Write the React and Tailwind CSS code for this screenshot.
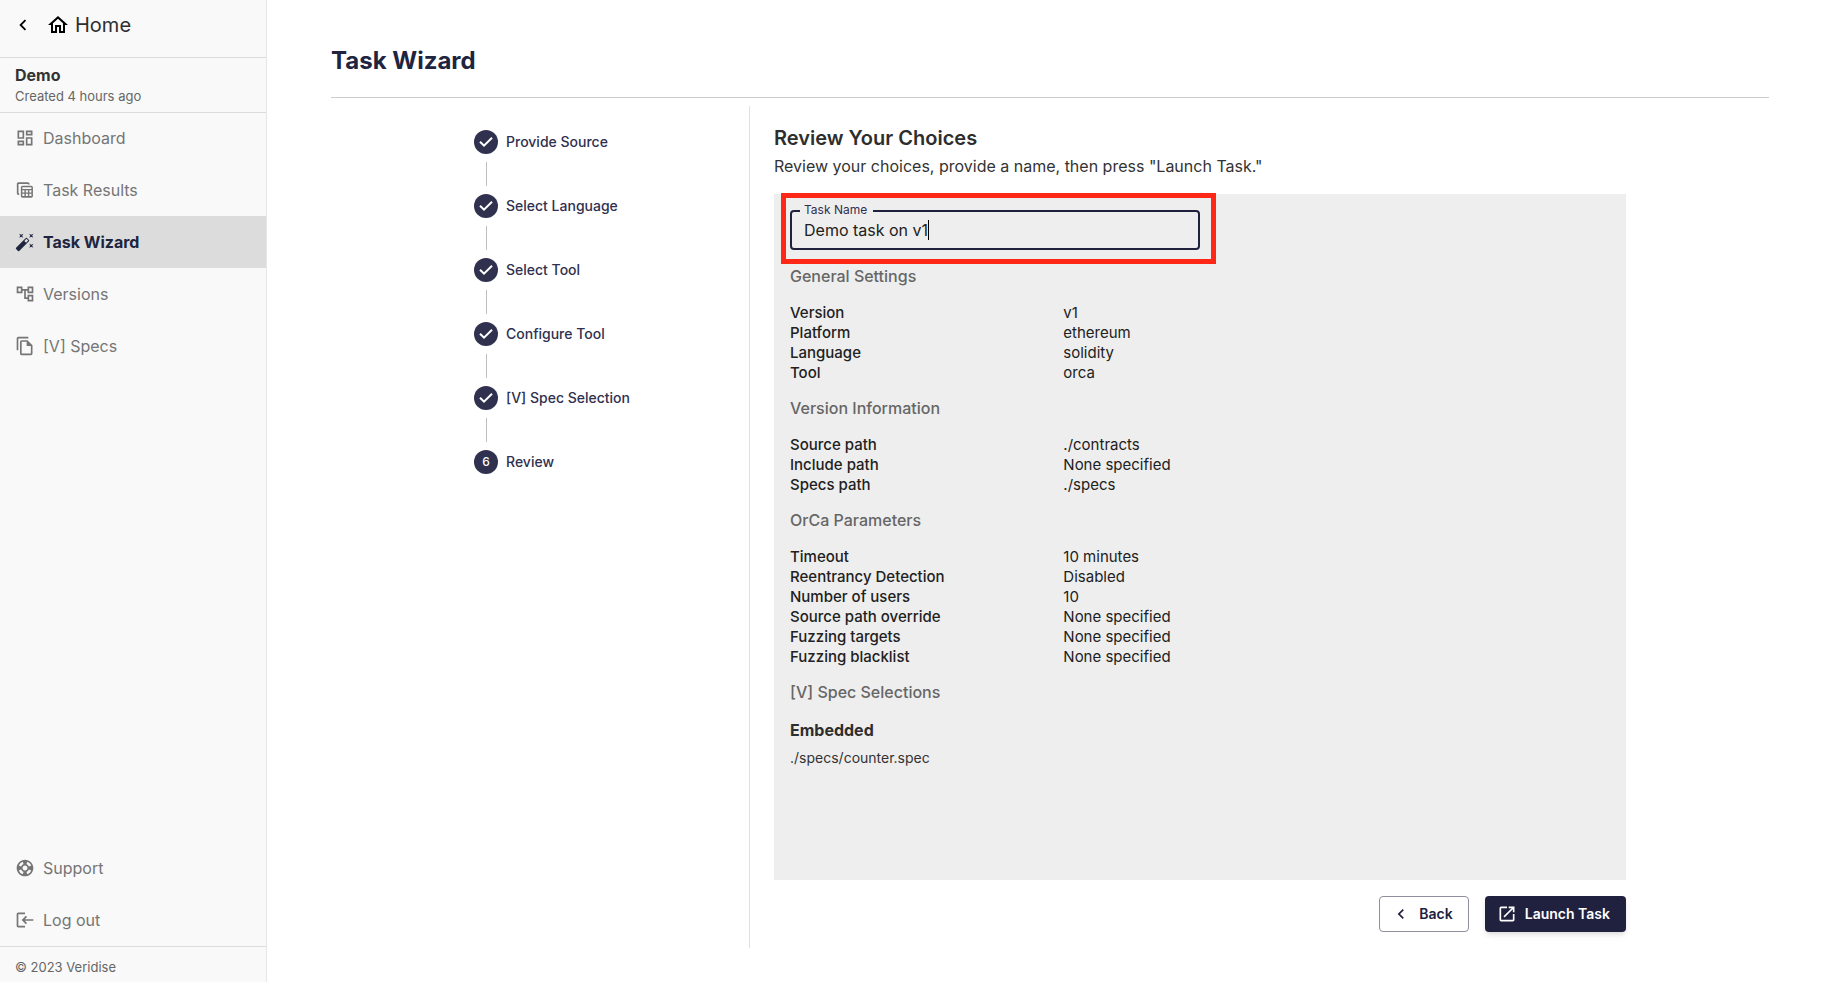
import { useState } from "react";
import {
  MdNavigateBefore,
  MdOutlineHome,
  MdOutlineDashboard,
  MdAutoFixHigh,
  MdOutlineAccountTree,
  MdOutlineFileCopy,
  MdSupport,
  MdOpenInNew,
} from "react-icons/md";

function LogOutIcon({ className }) {
  return (
    <svg viewBox="0 0 24 24" fill="currentColor" className={className} aria-hidden="true">
      <path d="M4 5h8V3H4c-1.1 0-2 .9-2 2v14c0 1.1.9 2 2 2h8v-2H4V5z" />
      <path d="M13 7l1.41 1.41L11.83 11H22v2H11.83l2.58 2.58L13 17l-5-5z" />
    </svg>
  );
}

function TablesIcon({ className }) {
  return (
    <svg viewBox="0 0 24 24" fill="currentColor" className={className} aria-hidden="true">
      <path d="M17.5 5.5h-2V4.8H4.2V16H5v2h-.8c-1.1 0-2-.9-2-2V4.8c0-1.1.9-2 2-2h11.3c1.1 0 2 .9 2 2v.7z" />
      <path
        fillRule="evenodd"
        d="M9 7h10.5c1.1 0 2 .9 2 2v10.2c0 1.1-.9 2-2 2H9c-1.1 0-2-.9-2-2V9c0-1.1.9-2 2-2zM8.8 8.8v1.9h10.9V8.8zM8.8 12.3v2.6h2.5v-2.6zM13 12.3v2.6h2.5v-2.6zM17.2 12.3v2.6h2.5v-2.6zM8.8 16.6v2.7h2.5v-2.7zM13 16.6v2.7h2.5v-2.7zM17.2 16.6v2.7h2.5v-2.7z"
      />
    </svg>
  );
}

function CheckIcon({ className }) {
  return (
    <svg
      viewBox="0 0 24 24"
      fill="none"
      stroke="currentColor"
      strokeWidth="2"
      className={className}
      aria-hidden="true"
    >
      <path d="M6 11.7l4 4L18 7.7" />
    </svg>
  );
}

const mainNav = [
  { label: "Dashboard", Icon: MdOutlineDashboard },
  { label: "Task Results", Icon: TablesIcon },
  { label: "Task Wizard", Icon: MdAutoFixHigh, active: true },
  { label: "Versions", Icon: MdOutlineAccountTree },
  { label: "[V] Specs", Icon: MdOutlineFileCopy },
];

const footerNav = [
  { label: "Support", Icon: MdSupport },
  { label: "Log out", Icon: LogOutIcon },
];

const steps = [
  "Provide Source",
  "Select Language",
  "Select Tool",
  "Configure Tool",
  "[V] Spec Selection",
  "Review",
];

const sections = [
  {
    title: "General Settings",
    rows: [
      ["Version", "v1"],
      ["Platform", "ethereum"],
      ["Language", "solidity"],
      ["Tool", "orca"],
    ],
  },
  {
    title: "Version Information",
    rows: [
      ["Source path", "./contracts"],
      ["Include path", "None specified"],
      ["Specs path", "./specs"],
    ],
  },
  {
    title: "OrCa Parameters",
    rows: [
      ["Timeout", "10 minutes"],
      ["Reentrancy Detection", "Disabled"],
      ["Number of users", "10"],
      ["Source path override", "None specified"],
      ["Fuzzing targets", "None specified"],
      ["Fuzzing blacklist", "None specified"],
    ],
  },
];

function NavItem({ label, Icon, active }) {
  return (
    <li>
      <a
        href="#"
        aria-current={active ? "page" : undefined}
        className={
          active
            ? "flex h-[52px] items-center gap-2 bg-[#dcdcdc] px-[15px] text-base font-bold text-[#20253f]"
            : "flex h-[52px] items-center gap-2 px-[15px] text-base text-[#757575]"
        }
      >
        <Icon className="size-5 shrink-0" />
        {label}
      </a>
    </li>
  );
}

function Sidebar() {
  return (
    <aside className="flex w-[267px] shrink-0 flex-col border-r border-[#e6e6e6] bg-[#f9f9f9]">
      <div className="flex h-[58px] items-start gap-3 border-b border-[#dcdcdc] px-3 pt-[11px]">
        <button type="button" aria-label="Go back" className="flex h-7 items-center text-black">
          <MdNavigateBefore className="size-[22px]" />
        </button>
        <a href="#" className="flex h-7 items-center gap-[5px] text-xl text-[#2e2e2e]">
          <MdOutlineHome className="size-6 text-black" />
          Home
        </a>
      </div>
      <div className="flex h-[55px] flex-col justify-center border-b border-[#dcdcdc] px-[15px]">
        <p className="text-base leading-[22px] font-bold text-[#333333]">Demo</p>
        <p className="text-[13px] leading-5 text-[#666666]">Created 4 hours ago</p>
      </div>
      <nav className="-mt-px flex grow flex-col justify-between">
        <ul>
          {mainNav.map((item) => (
            <NavItem key={item.label} {...item} />
          ))}
        </ul>
        <ul>
          {footerNav.map((item) => (
            <NavItem key={item.label} {...item} />
          ))}
        </ul>
      </nav>
      <footer className="flex h-9 items-end border-t border-[#dcdcdc] px-[15px] pb-[5px] text-[13px] leading-5 text-[#666666]">
        © 2023 Veridise
      </footer>
    </aside>
  );
}

function Stepper() {
  return (
    <ol className="flex flex-col gap-2 pt-6">
      {steps.map((step, index) => {
        const last = index === steps.length - 1;
        return (
          <li key={step} className="flex flex-col gap-2">
            <div className="flex items-center gap-2 text-sm leading-6 font-medium text-[#30304f]">
              <span className="flex size-6 items-center justify-center rounded-full bg-[#30304f] text-xs text-white">
                {last ? index + 1 : <CheckIcon className="size-6" />}
              </span>
              {step}
            </div>
            {!last && <span className="ml-3 h-6 w-px bg-[#bdbdbd]" />}
          </li>
        );
      })}
    </ol>
  );
}

function TaskNameField() {
  const [name, setName] = useState("Demo task on v1");
  return (
    <div className="relative w-1/2">
      <div className="flex h-10 items-center rounded border-2 border-[#20203f] px-3">
        <input
          id="task-name"
          type="text"
          value={name}
          onChange={(event) => setName(event.target.value)}
          className="field-sizing-content bg-transparent text-base text-[#212121] caret-transparent outline-none"
        />
        <span className="h-5 w-px bg-black" />
      </div>
      <label
        htmlFor="task-name"
        className="absolute -top-2 left-[10px] bg-[#eeeeee] pr-[6px] pl-1 text-xs leading-4 text-[#30304f]"
      >
        Task Name
      </label>
      <div className="pointer-events-none absolute -top-[17px] -right-4 -bottom-[14px] -left-[9px] border-5 border-[#ff2816]" />
    </div>
  );
}

function Section({ title, children }) {
  return (
    <section className="flex flex-col gap-[11px]">
      <h3 className="text-base leading-8 font-medium text-[#666666]">{title}</h3>
      {children}
    </section>
  );
}

function ReviewPanel() {
  return (
    <div className="grow bg-[#eeeeee] px-4 py-4">
      <TaskNameField />
      <div className="flex flex-col gap-[9px] pt-[10px]">
        {sections.map(({ title, rows }) => (
          <Section key={title} title={title}>
            <dl className="text-[15px] leading-5 text-[#212121]">
              {rows.map(([term, value]) => (
                <div key={term} className="grid grid-cols-3">
                  <dt className="font-medium">{term}</dt>
                  <dd>{value}</dd>
                </div>
              ))}
            </dl>
          </Section>
        ))}
        <Section title="[V] Spec Selections">
          <div className="flex flex-col gap-[7px]">
            <h4 className="text-base leading-[22px] font-bold text-[#2e2e2e]">Embedded</h4>
            <p className="text-sm leading-5 text-[#333333]">./specs/counter.spec</p>
          </div>
        </Section>
      </div>
    </div>
  );
}

export default function App() {
  return (
    <div className="flex min-h-screen bg-white font-['Inter',sans-serif]">
      <Sidebar />
      <main className="flex grow flex-col pt-[45px] pr-[52px] pb-[34px] pl-16">
        <h1 className="border-b border-[#cccccc] pb-5 text-2xl leading-8 font-bold text-[#20253f]">
          Task Wizard
        </h1>
        <div className="mx-auto mt-2 flex w-full max-w-[1152px] grow">
          <div className="w-[276px] shrink-0 border-r border-[#e0e0e0]">
            <Stepper />
          </div>
          <div className="flex grow flex-col gap-4 pb-4 pl-6">
            <header className="pt-4">
              <h2 className="text-xl leading-8 font-semibold text-[#2e2e2e]">Review Your Choices</h2>
              <p className="text-base leading-6 text-[#333333]">
                Review your choices, provide a name, then press "Launch Task."
              </p>
            </header>
            <ReviewPanel />
            <div className="flex justify-end gap-4 text-sm font-semibold">
              <button
                type="button"
                className="flex h-9 items-center gap-2 rounded border border-[#8f8f9f] pr-[15px] pl-[11px] text-[#20203f]"
              >
                <MdNavigateBefore className="size-5" />
                Back
              </button>
              <button
                type="button"
                className="flex h-9 items-center gap-2 rounded bg-[#20203f] pr-4 pl-3 text-white shadow-md"
              >
                <MdOpenInNew className="size-5" />
                Launch Task
              </button>
            </div>
          </div>
        </div>
      </main>
    </div>
  );
}
